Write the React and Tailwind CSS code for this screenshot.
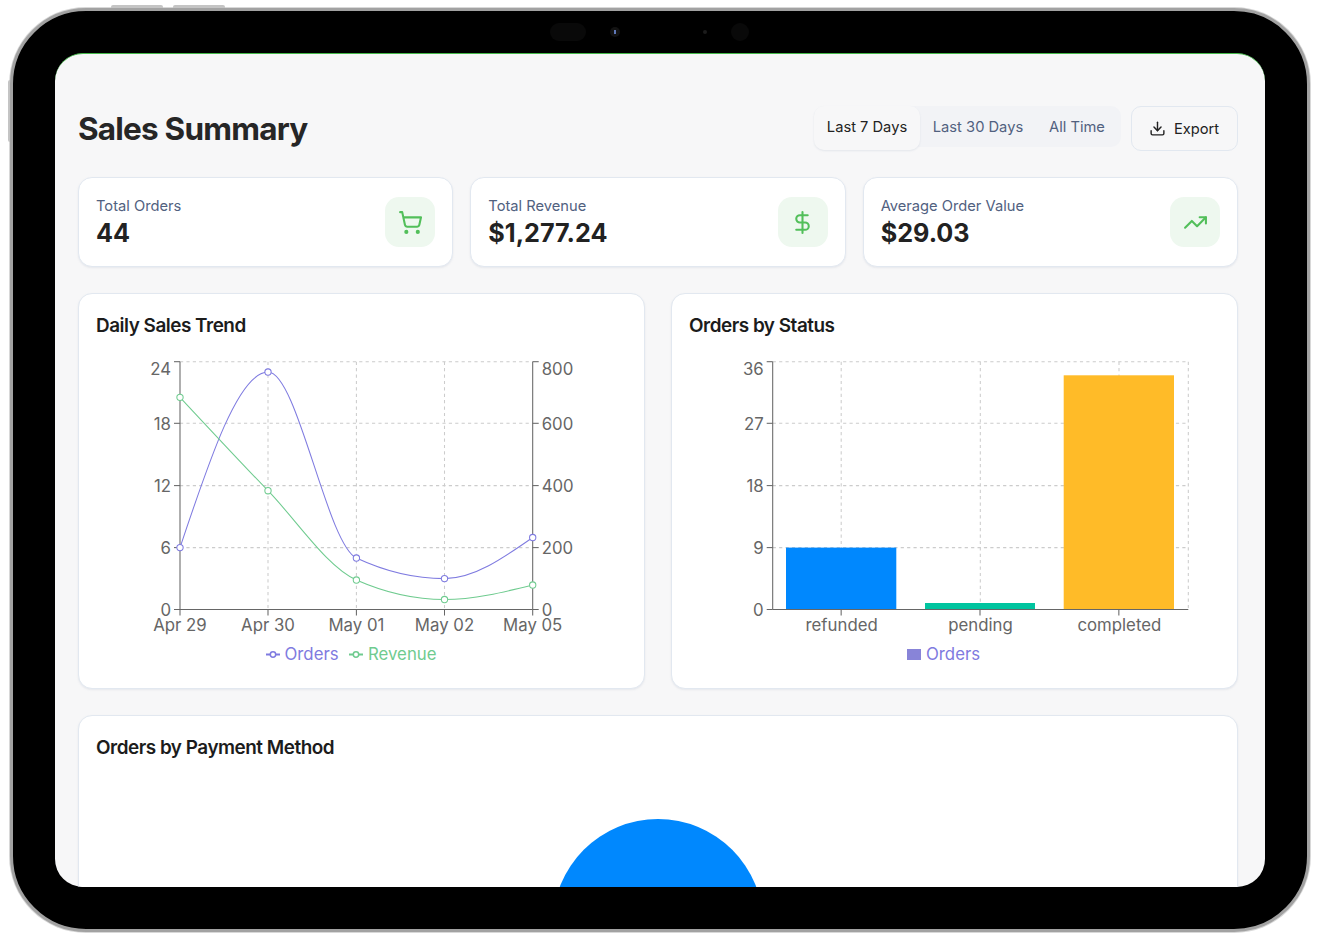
import React from 'react';
import { ShoppingCart, DollarSign, TrendingUp, Download } from 'lucide-react';

const FONT = 'Inter, "Liberation Sans", sans-serif';
const AXIS = '#666';
const GRID = '#ccc';
const PURPLE = '#7f7be0';
const GREEN = '#6fcb8f';
const DASH = '3.2 3.2';
const TICK_BASE = [25, 80, 142, 204, 266];

// d3 curveMonotoneX, same curve as the chart lib
const monotonePath = (pts) => {
  const n = pts.length;
  const dx = [];
  const s = [];
  for (let i = 0; i < n - 1; i++) {
    dx[i] = pts[i + 1][0] - pts[i][0];
    s[i] = (pts[i + 1][1] - pts[i][1]) / dx[i];
  }
  const sign = (v) => (v < 0 ? -1 : 1);
  const t = [];
  for (let i = 1; i < n - 1; i++) {
    const p = (s[i - 1] * dx[i] + s[i] * dx[i - 1]) / (dx[i - 1] + dx[i]);
    t[i] = (sign(s[i - 1]) + sign(s[i])) * Math.min(Math.abs(s[i - 1]), Math.abs(s[i]), 0.5 * Math.abs(p)) || 0;
  }
  t[0] = (3 * s[0] - t[1]) / 2;
  t[n - 1] = (3 * s[n - 2] - t[n - 2]) / 2;
  let d = `M${pts[0][0]},${pts[0][1]}`;
  for (let i = 0; i < n - 1; i++) {
    const h = dx[i] / 3;
    d += `C${pts[i][0] + h},${pts[i][1] + h * t[i]} ${pts[i + 1][0] - h},${pts[i + 1][1] - h * t[i + 1]} ${pts[i + 1][0]},${pts[i + 1][1]}`;
  }
  return d;
};

const stats = [
  { label: 'Total Orders', value: '44', Icon: ShoppingCart },
  { label: 'Total Revenue', value: '$1,277.24', Icon: DollarSign },
  { label: 'Average Order Value', value: '$29.03', Icon: TrendingUp },
];

const StatCard = ({ label, value, Icon }) => (
  <div className="flex items-center justify-between rounded-[14px] border border-[#e2e8f0] bg-white px-[17px] py-[19px] shadow-[0_1px_2px_rgba(148,163,184,0.18)]">
    <div>
      <div className="text-[14.7px] leading-[18px] text-[#51617f]">{label}</div>
      <div className="mt-[4px] text-[25.2px] leading-[28px] font-bold text-[#222]">{value}</div>
    </div>
    <div className="flex h-[50px] w-[50px] items-center justify-center rounded-[14px] bg-[#eef8ef]">
      <Icon className="h-[25px] w-[25px] text-[#52bf5a]" strokeWidth={2} />
    </div>
  </div>
);

const ChartCard = ({ title, children }) => (
  <div className="rounded-[14px] border border-[#e2e8f0] bg-white px-[17px] pt-[18px] pb-[18px] shadow-[0_1px_2px_rgba(148,163,184,0.18)]">
    <h2 className="text-[18.9px] leading-[28px] font-semibold tracking-tight text-[#1c1c1c]">{title}</h2>
    {children}
  </div>
);

const Tick = ({ x, y, anchor = 'middle', children, fill = AXIS }) => (
  <text x={x} y={y} textAnchor={anchor} fill={fill} fontSize="16.8" fontFamily={FONT}>
    {children}
  </text>
);

const LINE_X = [84, 172, 260.4, 348.5, 436.7];
const LINE_TOP = 11.7;
const LINE_BOTTOM = 259.5;
const LINE_Y = [11.7, 73.3, 135.6, 197.6, 259.5];
const orders = LINE_X.map((x, i) => [x, [197.6, 22, 208, 228.6, 187.5][i]]);
const revenue = LINE_X.map((x, i) => [x, [47.3, 140.7, 230, 249.5, 235][i]]);

const DailySalesChart = () => (
  <svg width="531" height="320" className="mt-[10px] block">
    {LINE_Y.slice(0, 4).map((y) => (
      <line key={y} x1={84} x2={436.7} y1={y} y2={y} stroke={GRID} strokeWidth="1.05" strokeDasharray={DASH} />
    ))}
    {LINE_X.slice(1, 4).map((x) => (
      <line key={x} x1={x} x2={x} y1={LINE_TOP} y2={LINE_BOTTOM} stroke={GRID} strokeWidth="1.05" strokeDasharray={DASH} />
    ))}
    <line x1={84} x2={84} y1={LINE_TOP} y2={LINE_BOTTOM} stroke={AXIS} strokeWidth="1.05" />
    <line x1={436.7} x2={436.7} y1={LINE_TOP} y2={LINE_BOTTOM} stroke={AXIS} strokeWidth="1.05" />
    <line x1={84} x2={436.7} y1={LINE_BOTTOM} y2={LINE_BOTTOM} stroke={AXIS} strokeWidth="1.05" />
    {LINE_Y.map((y) => (
      <g key={y}>
        <line x1={78} x2={84} y1={y} y2={y} stroke={AXIS} strokeWidth="1.05" />
        <line x1={436.7} x2={442.7} y1={y} y2={y} stroke={AXIS} strokeWidth="1.05" />
      </g>
    ))}
    {LINE_X.map((x) => (
      <line key={x} x1={x} x2={x} y1={LINE_BOTTOM} y2={LINE_BOTTOM + 6} stroke={AXIS} strokeWidth="1.05" />
    ))}
    {['24', '18', '12', '6', '0'].map((t, i) => (
      <Tick key={t} x={75} y={TICK_BASE[i]} anchor="end">{t}</Tick>
    ))}
    {['800', '600', '400', '200', '0'].map((t, i) => (
      <Tick key={t} x={445.7} y={TICK_BASE[i]} anchor="start">{t}</Tick>
    ))}
    {['Apr 29', 'Apr 30', 'May 01', 'May 02', 'May 05'].map((t, i) => (
      <Tick key={t} x={LINE_X[i]} y={280.5}>{t}</Tick>
    ))}
    <path d={monotonePath(orders)} fill="none" stroke={PURPLE} strokeWidth="1.05" />
    <path d={monotonePath(revenue)} fill="none" stroke={GREEN} strokeWidth="1.05" />
    {orders.map(([x, y]) => (
      <circle key={x} cx={x} cy={y} r="3.15" fill="#fff" stroke={PURPLE} strokeWidth="1.05" />
    ))}
    {revenue.map(([x, y]) => (
      <circle key={x} cx={x} cy={y} r="3.15" fill="#fff" stroke={GREEN} strokeWidth="1.05" />
    ))}
    <line x1={170} x2={184} y1={304.5} y2={304.5} stroke={PURPLE} strokeWidth="2" />
    <circle cx={177} cy={304.5} r="2.7" fill="#fff" stroke={PURPLE} strokeWidth="1.5" />
    <Tick x={188.5} y={310} anchor="start" fill={PURPLE}>Orders</Tick>
    <line x1={253} x2={267} y1={304.5} y2={304.5} stroke={GREEN} strokeWidth="2" />
    <circle cx={260} cy={304.5} r="2.7" fill="#fff" stroke={GREEN} strokeWidth="1.5" />
    <Tick x={272} y={310} anchor="start" fill={GREEN}>Revenue</Tick>
  </svg>
);

const BAR_Y = [11.7, 73.3, 135.6, 197.6, 259.5];
const BARS = [
  { label: 'refunded', x: 97, w: 110.3, y: 197.6, color: '#0088fe' },
  { label: 'pending', x: 236, w: 110, y: 253, color: '#00c49f' },
  { label: 'completed', x: 374.7, w: 110.3, y: 25.3, color: '#ffbb28' },
];

const OrdersStatusChart = () => (
  <svg width="531" height="320" className="mt-[10px] block">
    {BAR_Y.slice(0, 4).map((y) => (
      <line key={y} x1={83.7} x2={499.3} y1={y} y2={y} stroke={GRID} strokeWidth="1.05" strokeDasharray={DASH} />
    ))}
    {[152.2, 291.3, 430, 499.3].map((x) => (
      <line key={x} x1={x} x2={x} y1={11.7} y2={259.5} stroke={GRID} strokeWidth="1.05" strokeDasharray={DASH} />
    ))}
    {BARS.map((b) => (
      <rect key={b.label} x={b.x} y={b.y} width={b.w} height={259.5 - b.y} fill={b.color} />
    ))}
    <line x1={83.7} x2={83.7} y1={11.7} y2={259.5} stroke={AXIS} strokeWidth="1.05" />
    <line x1={83.7} x2={499.3} y1={259.5} y2={259.5} stroke={AXIS} strokeWidth="1.05" />
    {BAR_Y.map((y) => (
      <line key={y} x1={77.7} x2={83.7} y1={y} y2={y} stroke={AXIS} strokeWidth="1.05" />
    ))}
    {['36', '27', '18', '9', '0'].map((t, i) => (
      <Tick key={t} x={74.7} y={TICK_BASE[i]} anchor="end">{t}</Tick>
    ))}
    {BARS.map((b) => (
      <g key={b.label}>
        <line x1={b.x + b.w / 2} x2={b.x + b.w / 2} y1={259.5} y2={265.5} stroke={AXIS} strokeWidth="1.05" />
        <Tick x={b.x + b.w / 2 + 0.5} y={280.5}>{b.label}</Tick>
      </g>
    ))}
    <rect x={218} y={299} width={14} height={11} fill="#8884d8" />
    <Tick x={237} y={310} anchor="start" fill={PURPLE}>Orders</Tick>
  </svg>
);

const Tabs = () => (
  <div className="flex h-[41px] items-start rounded-[10px] bg-[#f2f3f6] text-[14.7px] leading-[20px]">
    <button type="button" className="h-[44px] w-[106px] rounded-[10px] bg-[#f7f7f8] pb-[3px] text-[#222] shadow-[0_1px_2px_rgba(148,163,184,0.2)]">
      Last 7 Days
    </button>
    <button type="button" className="h-[41px] w-[117px] pt-[1px] pr-[1px] text-[#51617f]">Last 30 Days</button>
    <button type="button" className="h-[41px] w-[84px] pt-[1px] pr-[4px] text-[#51617f]">All Time</button>
  </div>
);

const Screen = () => (
  <div className="h-[834px] w-[1210px] overflow-hidden rounded-[28px] border-t border-[#44b84a] bg-[#f7f7f8] pt-[52px] pr-[27px] pl-[23px]">
    <div className="flex items-start justify-between">
      <h1 className="pt-[3px] text-[31.5px] leading-[40px] font-bold tracking-tight text-[#262626]">Sales Summary</h1>
      <div className="flex items-start gap-[10px]">
        <Tabs />
        <button
          type="button"
          className="flex h-[45px] w-[107px] items-center justify-center gap-[8px] rounded-[10px] border border-[#e2e8f0] bg-[#f7f7f8] pr-[1px] text-[14.7px] text-[#222]"
        >
          <Download className="h-[17px] w-[17px]" strokeWidth={2} />
          <span className="pt-[2px]">Export</span>
        </button>
      </div>
    </div>

    <div className="mt-[26px] grid grid-cols-3 gap-[17px]">
      {stats.map((s) => (
        <StatCard key={s.label} {...s} />
      ))}
    </div>

    <div className="mt-[26px] grid grid-cols-2 gap-[26px]">
      <ChartCard title="Daily Sales Trend">
        <DailySalesChart />
      </ChartCard>
      <ChartCard title="Orders by Status">
        <OrdersStatusChart />
      </ChartCard>
    </div>

    <div className="mt-[26px]">
      <ChartCard title="Orders by Payment Method">
        <div className="mt-[57px] flex justify-center">
          <svg width="210" height="210" className="block">
            <circle cx="105" cy="105" r="105" fill="#0088fe" />
          </svg>
        </div>
      </ChartCard>
    </div>
  </div>
);

const App = () => (
  <div className="h-[940px] w-[1320px] overflow-hidden bg-white pt-[8px] pl-[10px]" style={{ fontFamily: FONT }}>
    <div className="relative h-[924px] w-[1300px] rounded-[76px] border-[3px] border-[#a2a2a2] bg-black p-[42px] shadow-[0_0_0_1px_#d8d8d8]">
      {/* hardware buttons and cameras sit over the frame */}
      <div className="absolute top-[-6px] left-[98px] h-[3px] w-[52px] rounded-t-[2px] bg-[#c4c4c4]" />
      <div className="absolute top-[-6px] left-[160px] h-[3px] w-[52px] rounded-t-[2px] bg-[#c4c4c4]" />
      <div className="absolute top-[69px] left-[-5px] h-[62px] w-[2px] rounded-l-[2px] bg-[#c4c4c4]" />
      <div className="absolute top-[12px] left-[537px] h-[18px] w-[36px] rounded-full bg-[#090909]" />
      <div className="absolute top-[16px] left-[597px] flex h-[10px] w-[10px] items-center justify-center rounded-full bg-[#131313]">
        <div className="h-[4px] w-[2px] bg-[#5f78b8]" />
      </div>
      <div className="absolute top-[19px] left-[690px] h-[4px] w-[4px] rounded-full bg-[#1c1c1c]" />
      <div className="absolute top-[12px] left-[718px] h-[18px] w-[18px] rounded-full bg-[#090909]" />
      <Screen />
    </div>
  </div>
);

export default App;
